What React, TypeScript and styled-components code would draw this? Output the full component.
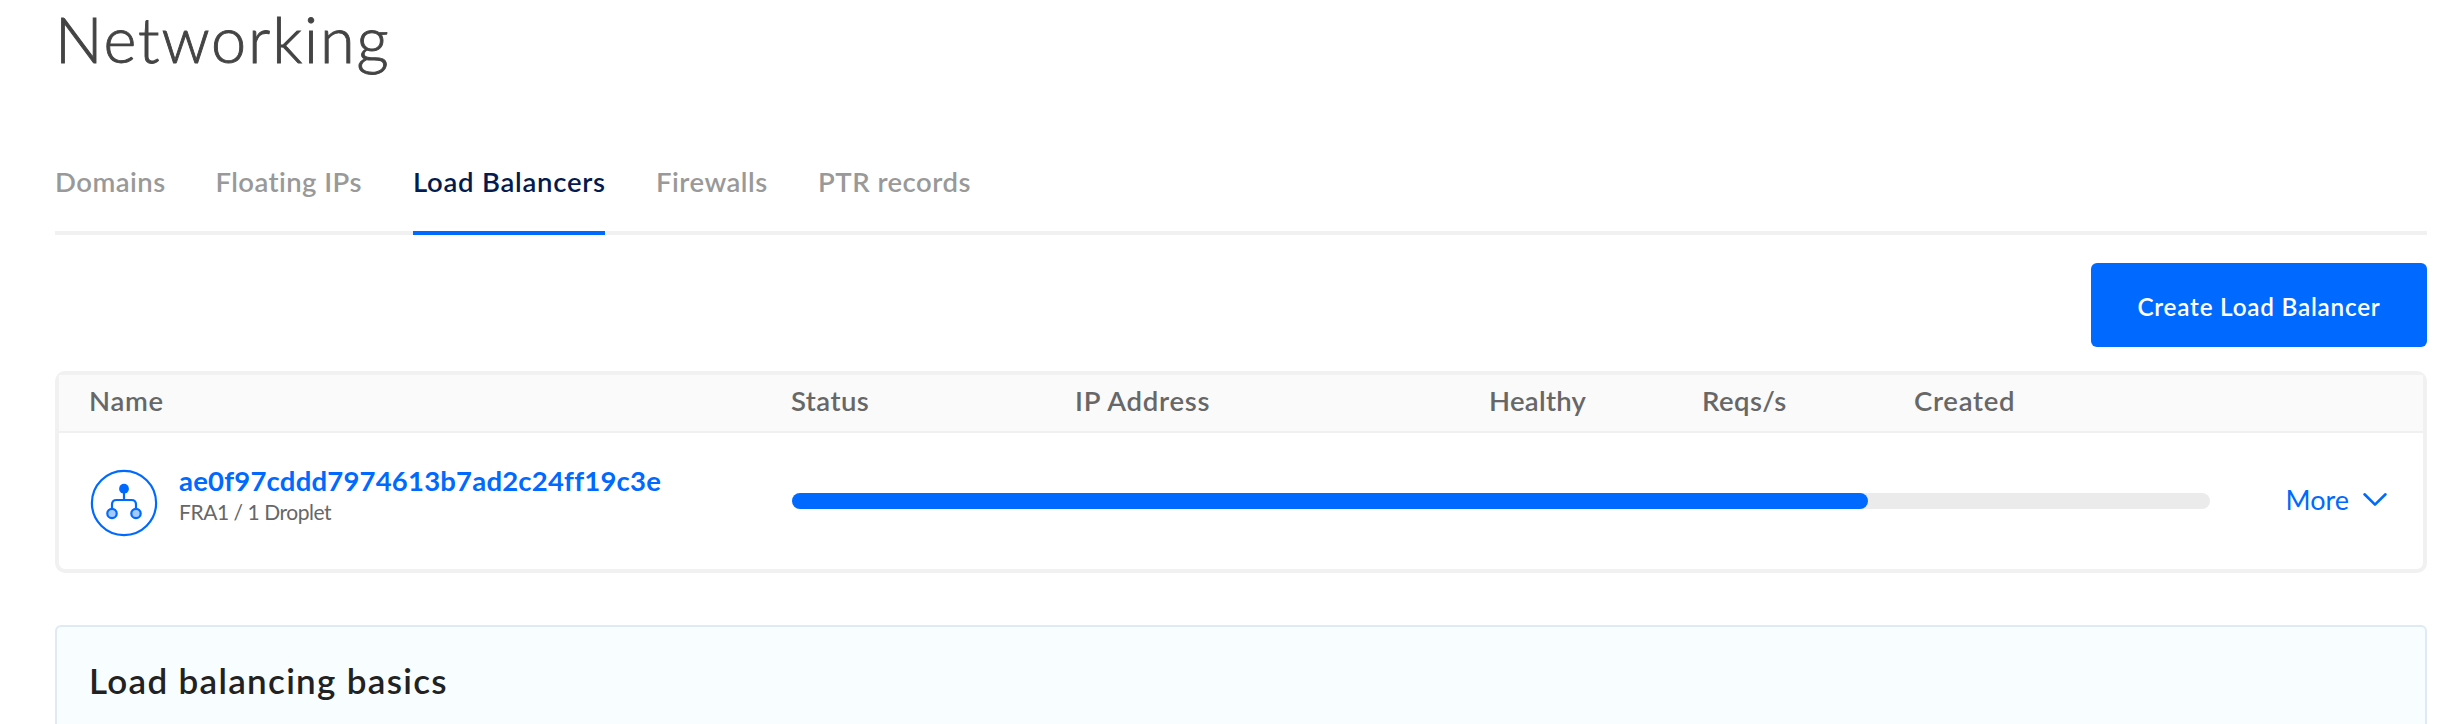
import React from 'react';
import styled, { createGlobalStyle } from 'styled-components';

const GlobalStyle = createGlobalStyle`
  *, *::before, *::after { box-sizing: border-box; }
  html, body { margin: 0; background: #fff; }
  body { font-family: Lato, "Liberation Sans", sans-serif; overflow: hidden; font-kerning: normal; }
`;

const Page = styled.main`
  width: 2456px;
  height: 724px;
  padding: 0 29px 0 55px;
  overflow: hidden;
  display: flex;
  flex-direction: column;
`;

const PageTitle = styled.h1`
  margin: 0;
  height: 152px;
  flex: none;
  padding-top: 1px;
  color: #444;
  font-size: 63px;
  line-height: 76px;
  font-weight: 300;
  letter-spacing: 1.85px;
  -webkit-text-stroke: 0.9px #444;
`;

const Tabs = styled.nav`
  display: flex;
  gap: 51px;
  height: 83px;
  flex: none;
  box-shadow: inset 0 -4px 0 #f1f1f1;
`;

const Tab = styled.a<{ $width: number; $tracking: number; $active?: boolean }>`
  width: ${(p) => p.$width}px;
  padding-top: 12px;
  color: ${(p) => (p.$active ? '#031b4e' : '#999')};
  border-bottom: 4px solid ${(p) => (p.$active ? '#0069ff' : 'transparent')};
  font-size: 27.5px;
  line-height: 36px;
  font-weight: 600;
  letter-spacing: ${(p) => p.$tracking}px;
  white-space: nowrap;
`;

const Actions = styled.div`
  display: flex;
  flex: none;
  justify-content: flex-end;
  padding: 28px 0 24px;
`;

const PrimaryButton = styled.button`
  width: 336px;
  height: 84px;
  padding: 2px 0 0;
  border: 0;
  border-radius: 6px;
  background: #0069ff;
  color: #fff;
  font-family: inherit;
  font-size: 24.3px;
  font-weight: 600;
  letter-spacing: 0.76px;
`;

const Table = styled.section`
  flex: none;
  border: 4px solid #f1f1f1;
  border-radius: 10px;
`;

const columns = '702px 284px 414px 213px 212px 1fr';

const HeaderRow = styled.div`
  display: grid;
  grid-template-columns: ${columns};
  height: 58px;
  padding: 8px 28px 0 30px;
  background: #fafafa;
  border-bottom: 2px solid #f0f0f0;
`;

const HeaderCell = styled.span<{ $tracking: number }>`
  color: #676767;
  font-size: 27.5px;
  line-height: 36px;
  font-weight: 600;
  letter-spacing: ${(p) => p.$tracking}px;
`;

const Row = styled.div`
  display: flex;
  align-items: center;
  height: 136px;
  padding: 0 35px 0 31px;
`;

const NameCell = styled.div`
  display: flex;
  align-items: center;
  width: 702px;
  gap: 21px;
`;

const BalancerGlyph = styled.svg`
  width: 68px;
  height: 68px;
  flex: none;
  margin-top: 4px;
`;

const NameLines = styled.div`
  display: flex;
  flex-direction: column;
  margin-bottom: 13px;
`;

const NameLink = styled.a`
  color: #0069ff;
  font-size: 27.5px;
  line-height: 34px;
  font-weight: 700;
  letter-spacing: 0.2px;
`;

const NameMeta = styled.span`
  color: #676767;
  font-size: 21px;
  line-height: 28px;
  letter-spacing: -0.45px;
`;

const ProgressTrack = styled.div`
  width: 1418px;
  height: 16px;
  border-radius: 8px;
  background: #ebebeb;
`;

const ProgressFill = styled.div`
  height: 16px;
  border-radius: 8px;
  background: #0069ff;
`;

const MoreMenu = styled.a`
  display: flex;
  align-items: center;
  gap: 13px;
  margin-left: auto;
  padding-bottom: 2px;
  color: #0069ff;
  font-size: 27px;
  line-height: 36px;
`;

const Chevron = styled.svg`
  width: 26px;
  height: 16px;
`;

const BasicsPanel = styled.section`
  flex: none;
  height: 180px;
  margin-top: 52px;
  padding: 32px 32px 0;
  border: 2px solid #dfeaf5;
  border-radius: 6px;
  background: #f8fdff;
`;

const PanelTitle = styled.h2`
  margin: 0;
  color: #222;
  font-size: 35px;
  line-height: 42px;
  font-weight: 600;
  letter-spacing: 1.3px;
`;

const tabs = [
  { label: 'Domains', width: 109.5, tracking: 0.47 },
  { label: 'Floating IPs', width: 146.5, tracking: 0.42 },
  { label: 'Load Balancers', width: 192, tracking: 0.75, active: true },
  { label: 'Firewalls', width: 111, tracking: 0.49 },
  { label: 'PTR records', width: 154, tracking: 0.48 },
];

const headers = [
  { label: 'Name', tracking: 0.67 },
  { label: 'Status', tracking: 0.45 },
  { label: 'IP Address', tracking: 0.75 },
  { label: 'Healthy', tracking: 0.28 },
  { label: 'Reqs/s', tracking: 0.42 },
  { label: 'Created', tracking: 0.73 },
];

const progress = 75.9;

function LoadBalancerIcon() {
  return (
    <BalancerGlyph viewBox="0 0 68 68" fill="none" stroke="#0069ff" strokeWidth="2.2">
      <circle cx="34" cy="34" r="32.1" />
      <path d="M34 19V31M22 39V35.5Q22 31 26.5 31H41.5Q46 31 46 35.5V39" />
      <circle cx="34" cy="19.7" r="4.9" fill="#0069ff" stroke="none" />
      <circle cx="22" cy="44.5" r="4.7" fill="#a6ccff" />
      <circle cx="46" cy="44.5" r="4.7" fill="#a6ccff" />
    </BalancerGlyph>
  );
}

export default function App() {
  return (
    <Page>
      <GlobalStyle />
      <PageTitle>Networking</PageTitle>
      <Tabs>
        {tabs.map((t) => (
          <Tab key={t.label} $width={t.width} $tracking={t.tracking} $active={t.active}>
            {t.label}
          </Tab>
        ))}
      </Tabs>
      <Actions>
        <PrimaryButton>Create Load Balancer</PrimaryButton>
      </Actions>
      <Table>
        <HeaderRow>
          {headers.map((h) => (
            <HeaderCell key={h.label} $tracking={h.tracking}>
              {h.label}
            </HeaderCell>
          ))}
        </HeaderRow>
        <Row>
          <NameCell>
            <LoadBalancerIcon />
            <NameLines>
              <NameLink>ae0f97cddd7974613b7ad2c24ff19c3e</NameLink>
              <NameMeta>FRA1 / 1 Droplet</NameMeta>
            </NameLines>
          </NameCell>
          <ProgressTrack>
            <ProgressFill style={{ width: `${progress}%` }} />
          </ProgressTrack>
          <MoreMenu>
            More
            <Chevron viewBox="0 0 26 16" fill="none" stroke="#0069ff" strokeWidth="2.6" strokeLinecap="round" strokeLinejoin="round">
              <path d="M2.5 2.3L13 12.6L23.5 2.3" />
            </Chevron>
          </MoreMenu>
        </Row>
      </Table>
      <BasicsPanel>
        <PanelTitle>Load balancing basics</PanelTitle>
      </BasicsPanel>
    </Page>
  );
}
